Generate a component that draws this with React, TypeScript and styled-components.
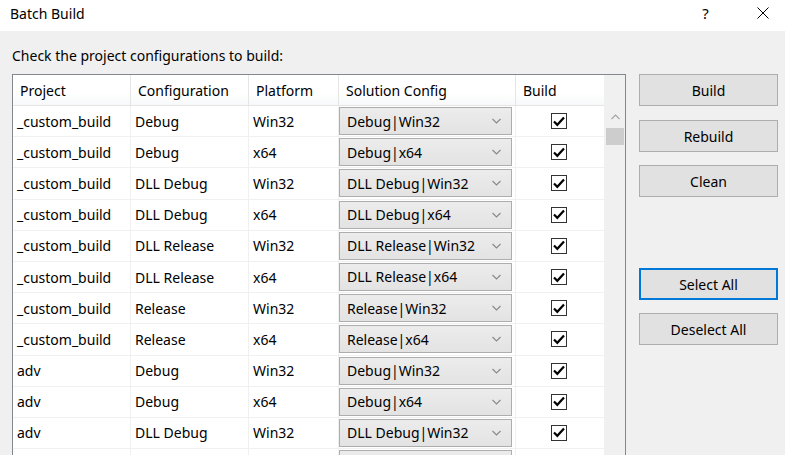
import React from "react";
import styled, { createGlobalStyle } from "styled-components";

const GlobalStyle = createGlobalStyle`
  html, body { margin: 0; padding: 0; background: #f0f0f0; }
  body { font-family: "Noto Sans", "Open Sans", sans-serif; font-size: 14px; color: #000; }
`;

const Window = styled.div`
  width: 785px;
  height: 455px;
  overflow: hidden;
  background: #f0f0f0;
  display: flex;
  flex-direction: column;
`;

const TitleBar = styled.div`
  height: 31px;
  flex: none;
  background: #fff;
  display: flex;
  align-items: center;
  padding-left: 10px;
`;

const Title = styled.div`
  flex: 1;
  font-size: 14px;
  margin-top: -5px;
`;

const TitleButton = styled.div<{ $gap?: number }>`
  width: 45px;
  height: 31px;
  margin-left: ${(p) => p.$gap ?? 0}px;
  display: flex;
  align-items: center;
  justify-content: center;
  margin-top: -6px;
  font-size: 15px;
`;

const Content = styled.div`
  padding: 12px 7px 0 12px;
  display: flex;
  flex-direction: column;
`;

const Label = styled.div`
  height: 31px;
  line-height: 26px;
`;

const Main = styled.div`
  display: flex;
  gap: 13px;
  align-items: flex-start;
`;

const TablePanel = styled.div`
  width: 612px;
  height: 420px;
  border: 1px solid #828790;
  background: #fff;
  display: flex;
`;

const Grid = styled.div`
  flex: 1;
  display: flex;
  flex-direction: column;
`;

const COLS = "118px 118px 90px 177px 88px";

const HeaderRow = styled.div`
  display: grid;
  grid-template-columns: ${COLS};
  height: 30px;
  border-bottom: 1px solid #e5e5e5;
  background: linear-gradient(#ffffff 60%, #f7f8f9);
`;

const HeaderCell = styled.div`
  display: flex;
  align-items: center;
  padding-left: 7px;
  border-right: 1px solid #e5e5e5;
  &:last-child { border-right: none; }
`;

const Row = styled.div`
  display: grid;
  grid-template-columns: ${COLS};
  height: 31.2px;
  box-sizing: border-box;
  border-bottom: 1px solid #f0f0f0;
  flex: none;
`;

const Cell = styled.div<{ $center?: boolean }>`
  display: flex;
  align-items: center;
  justify-content: ${(p) => (p.$center ? "center" : "flex-start")};
  padding-left: ${(p) => (p.$center ? "0" : "4px")};
  padding-right: ${(p) => (p.$center ? "2px" : "0")};
  border-right: 1px solid #f0f0f0;
  white-space: nowrap;
  overflow: hidden;
  &:last-child { border-right: none; }
`;

const ComboCell = styled.div`
  padding: 1px 3px 1px 0;
  border-right: 1px solid #f0f0f0;
  display: flex;
`;

const Combo = styled.div`
  flex: 1;
  height: 28px;
  box-sizing: border-box;
  border: 1px solid #adadad;
  background: linear-gradient(#ececec, #e3e3e3);
  display: flex;
  align-items: center;
  padding: 0 10px 0 7px;
`;

const ComboText = styled.span`
  flex: 1;
`;

const Check = styled.div`
  width: 16px;
  height: 16px;
  box-sizing: border-box;
  border: 1px solid #333;
  background: #fff;
  display: flex;
  align-items: center;
  justify-content: center;
`;

const Scrollbar = styled.div`
  width: 21px;
  background: #f0f0f0;
  display: flex;
  flex-direction: column;
  border-left: 1px solid #f0f0f0;
`;

const ScrollFiller = styled.div`
  height: 31px;
  flex: none;
`;

const ScrollArrow = styled.div`
  height: 21px;
  flex: none;
  display: flex;
  align-items: center;
  justify-content: center;
`;

const Thumb = styled.div`
  height: 17px;
  margin: 1px 1px 0 1px;
  background: #cdcdcd;
  flex: none;
`;

const Track = styled.div`
  flex: 1;
`;

const ButtonColumn = styled.div`
  width: 139px;
  display: flex;
  flex-direction: column;
`;

const Button = styled.div<{ $focused?: boolean; $gap?: number }>`
  height: 32px;
  box-sizing: border-box;
  margin-top: ${(p) => p.$gap ?? 0}px;
  border: ${(p) => (p.$focused ? "2px solid #0078d7" : "1px solid #adadad")};
  background: #e1e1e1;
  display: flex;
  align-items: center;
  justify-content: center;
`;

const Chevron = ({ up, color = "#888" }: { up?: boolean; color?: string }) => (
  <svg width="9" height="6" viewBox="0 0 9 6">
    <path
      d={up ? "M0.5 5 L4.5 1 L8.5 5" : "M0.5 1 L4.5 5 L8.5 1"}
      fill="none"
      stroke={color}
      strokeWidth="1.1"
    />
  </svg>
);

const CheckMark = () => (
  <svg width="12" height="11" viewBox="0 0 12 11">
    <path d="M1 5.5 L4.3 8.8 L11 1.5" fill="none" stroke="#000" strokeWidth="2.2" />
  </svg>
);

const rows: [string, string, string][] = [
  ["_custom_build", "Debug", "Win32"],
  ["_custom_build", "Debug", "x64"],
  ["_custom_build", "DLL Debug", "Win32"],
  ["_custom_build", "DLL Debug", "x64"],
  ["_custom_build", "DLL Release", "Win32"],
  ["_custom_build", "DLL Release", "x64"],
  ["_custom_build", "Release", "Win32"],
  ["_custom_build", "Release", "x64"],
  ["adv", "Debug", "Win32"],
  ["adv", "Debug", "x64"],
  ["adv", "DLL Debug", "Win32"],
];

export default function App() {
  return (
    <Window>
      <GlobalStyle />
      <TitleBar>
        <Title>Batch Build</Title>
        <TitleButton>?</TitleButton>
        <TitleButton $gap={12}>
          <svg width="12" height="12" viewBox="0 0 12 12">
            <path d="M0.5 0.5 L11.5 11.5 M11.5 0.5 L0.5 11.5" stroke="#000" strokeWidth="1" />
          </svg>
        </TitleButton>
      </TitleBar>
      <Content>
        <Label>Check the project configurations to build:</Label>
        <Main>
          <TablePanel>
            <Grid>
              <HeaderRow>
                <HeaderCell>Project</HeaderCell>
                <HeaderCell>Configuration</HeaderCell>
                <HeaderCell>Platform</HeaderCell>
                <HeaderCell>Solution Config</HeaderCell>
                <HeaderCell>Build</HeaderCell>
              </HeaderRow>
              {rows.map(([proj, conf, plat], i) => (
                <Row key={i}>
                  <Cell>{proj}</Cell>
                  <Cell>{conf}</Cell>
                  <Cell>{plat}</Cell>
                  <ComboCell>
                    <Combo>
                      <ComboText>{`${conf}|${plat}`}</ComboText>
                      <Chevron />
                    </Combo>
                  </ComboCell>
                  <Cell $center>
                    <Check>
                      <CheckMark />
                    </Check>
                  </Cell>
                </Row>
              ))}
              <Row>
                <Cell />
                <Cell />
                <Cell />
                <ComboCell>
                  <Combo />
                </ComboCell>
                <Cell />
              </Row>
            </Grid>
            <Scrollbar>
              <ScrollFiller />
              <ScrollArrow>
                <Chevron up color="#a3a3a3" />
              </ScrollArrow>
              <Thumb />
              <Track />
              <ScrollArrow>
                <Chevron color="#a3a3a3" />
              </ScrollArrow>
            </Scrollbar>
          </TablePanel>
          <ButtonColumn>
            <Button>Build</Button>
            <Button $gap={14}>Rebuild</Button>
            <Button $gap={13}>Clean</Button>
            <Button $gap={71} $focused>Select All</Button>
            <Button $gap={13}>Deselect All</Button>
          </ButtonColumn>
        </Main>
      </Content>
    </Window>
  );
}
